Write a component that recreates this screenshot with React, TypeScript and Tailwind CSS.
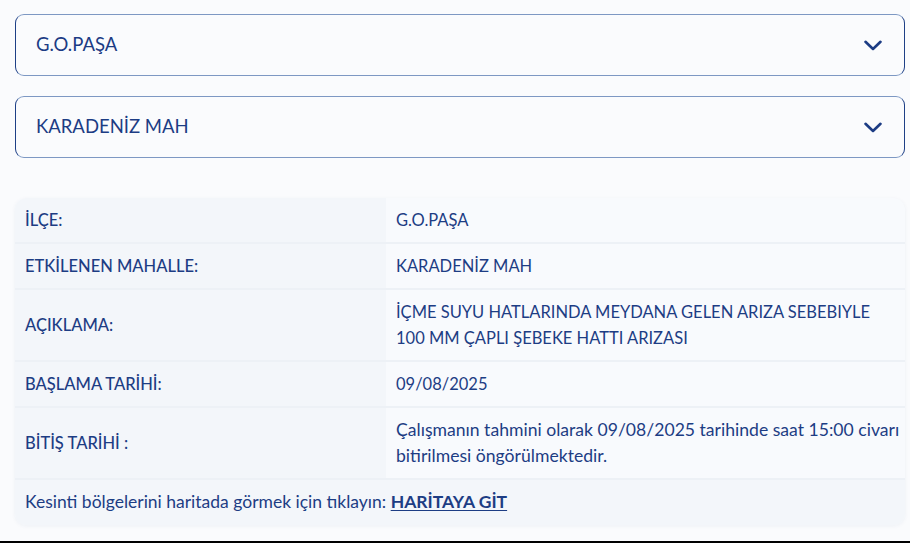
type Row = { label: string; value: string[]; lower?: boolean };

const rows: Row[] = [
  { label: "İLÇE:", value: ["G.O.PAŞA"] },
  { label: "ETKİLENEN MAHALLE:", value: ["KARADENİZ MAH"] },
  {
    label: "AÇIKLAMA:",
    value: ["İÇME SUYU HATLARINDA MEYDANA GELEN ARIZA SEBEBIYLE", "100 MM ÇAPLI ŞEBEKE HATTI ARIZASI"],
  },
  { label: "BAŞLAMA TARİHİ:", value: ["09/08/2025"] },
  {
    label: "BİTİŞ TARİHİ :",
    value: ["Çalışmanın tahmini olarak 09/08/2025 tarihinde saat 15:00 civarı", "bitirilmesi öngörülmektedir."],
    lower: true,
  },
];

function Chevron() {
  return (
    <svg width="18" height="11" viewBox="0 0 18 11" fill="none" className="text-[#1c3c84]">
      <path d="M1.5 1.8 9 9 16.5 1.8" stroke="currentColor" strokeWidth="2.6" strokeLinecap="round" strokeLinejoin="round" />
    </svg>
  );
}

function SelectBox({ value }: { value: string }) {
  return (
    <div className="flex h-[62px] items-center justify-between rounded-[9px] border border-[#7d98c3] border-x-[#1d3f86] bg-[#fafbfd] pl-5 pr-[22px]">
      <span className="text-[18.5px] text-[#1c3c84]">{value}</span>
      <Chevron />
    </div>
  );
}

export default function App() {
  return (
    <div
      className="flex h-[543px] flex-col bg-[#fafbfd] text-[#1d3d84]"
      style={{ fontFamily: "Lato, 'Noto Sans', sans-serif" }}
    >
      <div className="flex-1 pl-[15px] pr-[5px] pt-[14px]">
        <div className="flex flex-col gap-5">
          <SelectBox value="G.O.PAŞA" />
          <SelectBox value="KARADENİZ MAH" />
        </div>

        <div className="mt-10 overflow-hidden rounded-xl bg-[#f8fafd] shadow-[0_1px_4px_rgba(30,60,120,0.06)]">
          {rows.map((row) => (
            <div key={row.label} className="flex border-b-2 border-[#edf1f6]">
              <div className="flex w-[371px] shrink-0 items-center bg-[#f3f6fa] px-[10px] text-[16.5px] font-medium">
                {row.label}
              </div>
              <div
                className={`flex min-h-[44px] flex-1 flex-col justify-center whitespace-nowrap px-[10px] py-[9px] leading-[26px] ${
                  row.lower ? "text-[17.6px]" : "text-[16.5px]"
                }`}
              >
                {row.value.map((v) => (
                  <span key={v}>{v}</span>
                ))}
              </div>
            </div>
          ))}
          <div className="flex h-[45px] items-center bg-[#f3f6fa] px-[10px] text-[17.5px]">
            <span>Kesinti bölgelerini haritada görmek için tıklayın:&nbsp;</span>
            <a className="font-bold underline underline-offset-2" href="#">
              HARİTAYA GİT
            </a>
          </div>
        </div>
      </div>
      <div className="h-[2px] bg-black" />
    </div>
  );
}
